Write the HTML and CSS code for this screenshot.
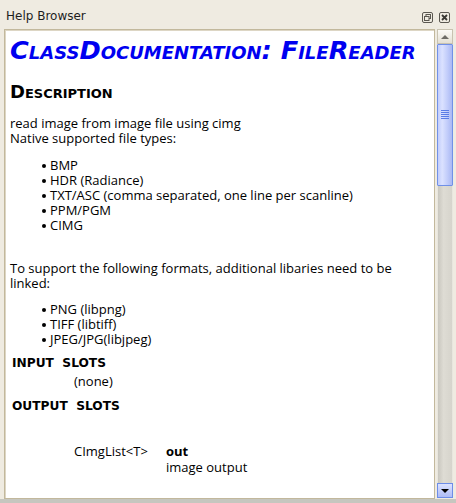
FILE: index.html
```html
<!DOCTYPE html>
<html>
<head>
<meta charset="utf-8">
<link rel="stylesheet" href="styles.css">
</head>
<body>
<div class="window">
  <div class="titlebar">
    <span class="title">Help Browser</span>
    <div class="tb-buttons">
      <svg class="tb-btn" width="11" height="11" viewBox="0 0 11 11">
        <rect x="0.5" y="0.5" width="10" height="10" rx="1.5" fill="none" stroke="#5a5750"/>
        <rect x="4" y="2.5" width="4.5" height="4" fill="none" stroke="#5a5750"/>
        <rect x="2.5" y="4.5" width="4.5" height="4" fill="#efebe1" stroke="#5a5750"/>
      </svg>
      <svg class="tb-btn" width="11" height="11" viewBox="0 0 11 11">
        <rect x="0.5" y="0.5" width="10" height="10" rx="1.5" fill="none" stroke="#5a5750"/>
        <path d="M3 3 L8 8 M8 3 L3 8" stroke="#3a3833" stroke-width="1.8"/>
      </svg>
    </div>
  </div>
  <div class="main">
    <div class="panel">
      <div class="content">
        <h1 class="doc-title">ClassDocumentation: FileReader</h1>
        <h2 class="section">Description</h2>
        <p class="text">read image from image file using cimg<br>Native supported file types:</p>
        <ul class="list">
          <li>BMP</li>
          <li>HDR (Radiance)</li>
          <li>TXT/ASC (comma separated, one line per scanline)</li>
          <li>PPM/PGM</li>
          <li>CIMG</li>
        </ul>
        <p class="text para2">To support the following formats, additional libaries need to be<br>linked:</p>
        <ul class="list list2">
          <li>PNG (libpng)</li>
          <li>TIFF (libtiff)</li>
          <li>JPEG/JPG(libjpeg)</li>
        </ul>
        <h3 class="slots">INPUT&nbsp; SLOTS</h3>
        <div class="slot-none">(none)</div>
        <h3 class="slots slots-out">OUTPUT&nbsp; SLOTS</h3>
        <div class="slot-row">
          <div class="slot-type">CImgList&lt;T&gt;</div>
          <div class="slot-desc">
            <div class="slot-name">out</div>
            <div>image output</div>
          </div>
        </div>
      </div>
    </div>
    <div class="scrollbar">
      <div class="sb-btn sb-up"><span class="tri-up"></span></div>
      <div class="sb-thumb">
        <div class="grip"><i></i><i></i><i></i><i></i><i></i></div>
      </div>
      <div class="sb-track"></div>
      <div class="sb-btn sb-down"><span class="tri-down"></span></div>
    </div>
  </div>
  <div class="bottom-strip"></div>
</div>
</body>
</html>
```

FILE: styles.css
```css
html, body {
  margin: 0;
  padding: 0;
}
body {
  width: 456px;
  height: 503px;
  background: #efebe1;
  font-family: "Open Sans", "DejaVu Sans", sans-serif;
  overflow: hidden;
}
.window {
  display: flex;
  flex-direction: column;
  height: 503px;
}
.titlebar {
  height: 29px;
  display: flex;
  align-items: center;
  justify-content: space-between;
  padding: 0 6px 0 6px;
  box-sizing: border-box;
}
.title {
  font-family: "DejaVu Sans", sans-serif;
  font-size: 12px;
  color: #1e1e1e;
  margin-top: 3px;
}
.tb-buttons {
  display: flex;
  gap: 6px;
  margin-top: 5px;
}
.tb-btn {
  display: block;
}
.main {
  display: flex;
  height: 470px;
  padding: 0 3px 0 4px;
  gap: 1px;
}
.panel {
  width: 432px;
  box-sizing: border-box;
  border: 1px solid #c2b89c;
  background: #fff;
  box-shadow: inset 1px 1px 0 #ddd6c4;
  overflow: hidden;
}
.content {
  padding: 4px 0 0 5px;
  color: #000;
}
.doc-title {
  font-family: "DejaVu Sans", sans-serif;
  font-weight: bold;
  font-style: italic;
  font-variant: small-caps;
  font-size: 25.6px;
  line-height: 32px;
  color: #0000f0;
  margin: 0;
  white-space: nowrap;
}
.section {
  font-family: "DejaVu Sans", sans-serif;
  font-weight: bold;
  font-variant: small-caps;
  font-size: 18px;
  line-height: 22px;
  margin: 15px 0 0 0;
}
.text {
  font-size: 13px;
  line-height: 15px;
  margin: 13px 0 0 0;
  white-space: nowrap;
}
.para2 {
  margin-top: 28px;
}
.list {
  font-size: 13px;
  line-height: 15px;
  margin: 12px 0 0 0;
  padding-left: 40px;
  list-style: none;
}
.list2 {
  margin-top: 11px;
}
.list li {
  display: flex;
  align-items: center;
}
.list li::before {
  content: "";
  width: 4px;
  height: 4px;
  border-radius: 50%;
  background: #000;
  margin: 1px 4px 0 -8px;
  flex: none;
}
.slots {
  font-family: "DejaVu Sans", sans-serif;
  font-weight: bold;
  font-size: 12.2px;
  line-height: 16px;
  margin: 8px 0 0 2px;
}
.slots-out {
  margin-top: 9px;
}
.slot-none {
  font-size: 13px;
  line-height: 16px;
  margin: 2px 0 0 64px;
}
.slot-row {
  display: flex;
  font-size: 13px;
  line-height: 16px;
  margin: 29px 0 0 64px;
}
.slot-type {
  width: 92px;
}
.slot-name {
  font-weight: bold;
}
.scrollbar {
  width: 16px;
  margin-left: 1px;
  display: flex;
  flex-direction: column;
  height: 469px;
}
.sb-btn {
  height: 15px;
  box-sizing: border-box;
  display: flex;
  align-items: center;
  justify-content: center;
}
.sb-up {
  background: linear-gradient(#fbfaf6, #e4e0d4);
  border: 1px solid #c8c2b0;
}
.sb-down {
  background: linear-gradient(#dbe2ff, #aebcf6);
  border: 1px solid #6d8de8;
}
.tri-up {
  width: 0;
  height: 0;
  border-left: 4px solid transparent;
  border-right: 4px solid transparent;
  border-bottom: 4px solid #6e6c66;
}
.tri-down {
  width: 0;
  height: 0;
  border-left: 4px solid transparent;
  border-right: 4px solid transparent;
  border-top: 4px solid #000;
}
.sb-thumb {
  height: 142px;
  box-sizing: border-box;
  border: 1px solid #7090e8;
  border-radius: 1px;
  background: linear-gradient(90deg, #c2cdfb, #dbe2ff 30%, #c0cbfa 70%, #a9b8f3);
  display: flex;
  align-items: center;
  justify-content: center;
}
.grip {
  display: flex;
  flex-direction: column;
  gap: 1px;
  margin-top: -2px;
}
.grip i {
  display: block;
  width: 8px;
  height: 1px;
  background: #5a7ce6;
}
.sb-track {
  flex: 1;
  background: linear-gradient(90deg, #c9c7bf, #dedcd4 40%, #d6d4cc);
  border-left: 1px solid #e8e6de;
  border-right: 1px solid #e8e6de;
}
.bottom-strip {
  height: 4px;
  background: #c6c6bf;
  margin-top: auto;
}
```
